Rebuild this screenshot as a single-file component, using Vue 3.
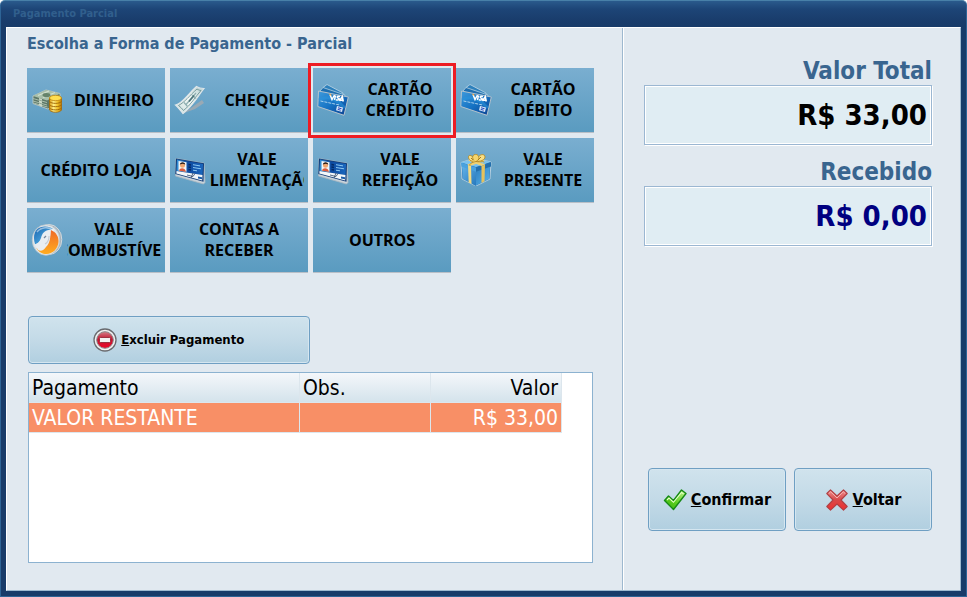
<script setup>
const methods = [
  { label: ['DINHEIRO'], icon: 'cash' },
  { label: ['CHEQUE'], icon: 'cheque' },
  { label: ['CARTÃO', 'CRÉDITO'], icon: 'card', selected: true },
  { label: ['CARTÃO', 'DÉBITO'], icon: 'card' },
  { label: ['CRÉDITO LOJA'] },
  { label: ['VALE', 'ALIMENTAÇÃO'], icon: 'badge' },
  { label: ['VALE', 'REFEIÇÃO'], icon: 'badge' },
  { label: ['VALE', 'PRESENTE'], icon: 'gift' },
  { label: ['VALE', 'COMBUSTÍVEL'], icon: 'fuel' },
  { label: ['CONTAS A', 'RECEBER'] },
  { label: ['OUTROS'] },
]

const payments = [{ name: 'VALOR RESTANTE', note: '', value: 'R$ 33,00' }]
</script>

<template>
  <div class="window">
    <svg class="defs" aria-hidden="true">
      <defs>
        <linearGradient id="gold" x1="0" x2="1"><stop offset="0" stop-color="#d99a10" /><stop offset=".35" stop-color="#fff08a" /><stop offset=".7" stop-color="#f0bd20" /><stop offset="1" stop-color="#b87808" /></linearGradient>
        <linearGradient id="card" x1="0" y1="0" x2="1" y2="1"><stop offset="0" stop-color="#3f9bdc" /><stop offset=".5" stop-color="#1673c4" /><stop offset="1" stop-color="#0a3c8c" /></linearGradient>
        <linearGradient id="paper" x1="0" y1="1" x2="1" y2="0"><stop offset="0" stop-color="#c8dcdc" /><stop offset=".5" stop-color="#f2f8f6" /><stop offset="1" stop-color="#b5cfd0" /></linearGradient>
        <linearGradient id="idcard" x1="0" x2="1"><stop offset="0" stop-color="#3692d8" /><stop offset=".45" stop-color="#0d4aa0" /><stop offset="1" stop-color="#1b67be" /></linearGradient>
        <linearGradient id="giftL" x1="0" y1="0" x2="1" y2="1"><stop offset="0" stop-color="#63b2e8" /><stop offset="1" stop-color="#2678bd" /></linearGradient>
        <linearGradient id="giftR" x1="0" y1="0" x2="1" y2="1"><stop offset="0" stop-color="#2a7dc0" /><stop offset="1" stop-color="#5cb4ea" /></linearGradient>
        <linearGradient id="orange" x1="0" y1="0" x2="0" y2="1"><stop offset="0" stop-color="#f06a28" /><stop offset="1" stop-color="#ffac20" /></linearGradient>
        <linearGradient id="sky" x1="0" y1="0" x2="1" y2="1"><stop offset="0" stop-color="#1763ae" /><stop offset="1" stop-color="#62c2f2" /></linearGradient>
        <linearGradient id="red" x1="0" y1="0" x2="0" y2="1"><stop offset="0" stop-color="#d28088" /><stop offset=".45" stop-color="#c41430" /><stop offset="1" stop-color="#ec0828" /></linearGradient>
        <linearGradient id="green" x1="1" y1="0" x2="0" y2="1"><stop offset="0" stop-color="#c8f59a" /><stop offset=".55" stop-color="#5cd020" /><stop offset="1" stop-color="#3aae10" /></linearGradient>
        <linearGradient id="cross" x1="0" y1="0" x2="0" y2="1"><stop offset="0" stop-color="#f09090" /><stop offset=".5" stop-color="#d84848" /><stop offset="1" stop-color="#f03030" /></linearGradient>
      </defs>
    </svg>

    <header class="titlebar">Pagamento Parcial</header>

    <main class="content">
      <section class="left">
        <h1 class="heading">Escolha a Forma de Pagamento - Parcial</h1>

        <div class="methods">
          <button
            v-for="(m, i) in methods"
            :key="i"
            type="button"
            class="tile"
            :class="{ selected: m.selected }"
          >
            <svg v-if="m.icon" class="tile-icon" viewBox="0 0 32 32" aria-hidden="true">
              <g v-if="m.icon === 'cash'">
                <path d="M2 12 15 6l14 3.500v7L17 25 2 19.500z" fill="#5d7767" stroke="#c8d0cc" stroke-width=".8" />
                <path d="M2 12 15 6l14 3.500-13 7z" fill="#a9c0ab" />
                <path d="M7 11.500 18 7M12 13.500 24 8.500" stroke="#d3e0d0" stroke-width="1.300" />
                <ellipse cx="15.500" cy="11" rx="4" ry="2" fill="#66836a" />
                <path d="M2 14.500l14 4M2 17l14 4M2.500 19l14 4" stroke="#a8bdab" stroke-width="1" fill="none" />
                <path d="M8 14v7.500l3 1.200v-7.600z" fill="#cbd8c8" />
                <path d="M8 16l3 1M8 19l3 1" stroke="#86a08c" stroke-width=".8" />
                <path d="M18.500 14v12c2 3 10.500 3 12 0V14z" fill="url(#gold)" stroke="#a66a06" stroke-width=".8" />
                <path d="M18.500 17.500c2 2.500 10 2.500 12 0M18.500 20.800c2 2.500 10 2.500 12 0M18.500 24c2 2.500 10 2.500 12 0" fill="none" stroke="#9a6204" stroke-width=".9" />
                <ellipse cx="24.500" cy="14" rx="6" ry="2.700" fill="#ffdf50" stroke="#b98210" stroke-width=".8" />
              </g>
              <g v-else-if="m.icon === 'cheque'">
                <path d="M10 29 28 16l2 3-9 6z" fill="#9aa9b4" />
                <path d="M1.500 21C9 19 12 12 22.500 2.500c3 2 5 2 7.500 2C24 12 19 22 9 29.500 6 26 4 23 1.500 21z" fill="url(#paper)" stroke="#dfe6e8" stroke-width="1.200" />
                <path d="M4.500 21.500C11 18 15 12 23 5c1.500 1 2.500 1.300 4 1.500C21 13 17 21 9.500 26.500 8 24.500 6.500 23 4.500 21.500z" fill="none" stroke="#6f9496" stroke-width=".9" />
                <path d="M12 20.500 22 9M10 18.500l3.500 4M18 11l4 3.500" stroke="#8fafb1" stroke-width="1.200" />
                <path d="M15 17.500 20 11.500" stroke="#4d757b" stroke-width="1.600" />
              </g>
              <g v-else-if="m.icon === 'card'">
                <path d="M6 3.500l4-3L26 9l-2 14z" fill="#2d80bc" stroke="#bed6e4" stroke-width=".8" />
                <path d="M3 7l3-3.500L28 11l-3 13z" fill="#1c6eb0" stroke="#b3cfdf" stroke-width=".8" />
                <path d="M1.500 7 31.300 13 27 31.300 .800 22.500z" fill="url(#card)" stroke="#b4c2cc" stroke-width="1" />
                <path d="M2 16c9-5 17-1 26 8" fill="none" stroke="#2b94dc" stroke-width="3" opacity=".6" />
                <path d="M13 10.500l2 5 2.500-4.500M18.500 11.300l-1 4.700M23 12.500c-4-1-3 1.500-1.500 1.800s.5 2.500-2.500 1.500M22.500 17l2.800-4.500 1 5M23.500 16l2.500.6" fill="none" stroke="#fff" stroke-width="1.500" />
                <path d="M11.500 9.800l2.500.5.600 2z" fill="#f29a26" />
                <path d="M3.500 17l19 4" stroke="#a9d2ee" stroke-width="1" stroke-dasharray="3 1" />
                <path d="M20 22l6 1.500-1 4.500-6-1.800z" fill="#dbe9fa" />
                <path d="M21 23.800l3.500 .9M20.700 25.400l3 .8" stroke="#2444b8" stroke-width="1" />
              </g>
              <g v-else-if="m.icon === 'badge'">
                <path d="M2 4.500l28 4.700 1 19.300-1.500 1.500L1.500 22z" fill="#c9d3da" stroke="#aab8c2" stroke-width=".8" />
                <path d="M2 4.500l28 4.700-.5 18.500L1.300 20z" fill="#123c78" />
                <path d="M3 5.500l26 4.500-.5 11L2.500 17z" fill="url(#idcard)" />
                <path d="M2.500 17l26 4-.3 5.500L2.300 19.500z" fill="#f3f7fa" />
                <path d="M4.500 7l8 1.300v9.500l-8-1.300z" fill="#f2f6f8" />
                <circle cx="8.500" cy="11.300" r="2.500" fill="#f0a66e" />
                <path d="M5.800 10.500c.5-3 5-3 5.500 0l-2.500-.8z" fill="#2b1c18" />
                <path d="M5 16.700c1-3.500 6-3 7 1z" fill="#dc5b3c" />
                <path d="M14.500 10.500l2.500.4M14.500 13l2.500.4M14.500 15.500l2.500.4" stroke="#062a64" stroke-width="1.500" />
                <path d="M19 10.700l7 1.200M19 13.500l8 1.300M19 16.200l4 .6" stroke="#8bc8f2" stroke-width="1" />
                <path d="M13 21l6 1.500 2-3M19 19l-2 5" stroke="#304664" stroke-width=".8" fill="none" />
                <path d="M24 22.500l4 .8v2l-4-.8z" fill="#1d5da8" />
              </g>
              <g v-else-if="m.icon === 'gift'">
                <path d="M1 8.500 15 4l16 4-1 17-14 7L2 25z" fill="#2676b8" stroke="#b5cfdf" stroke-width="1" />
                <path d="M2 12l14 5v15L3 25z" fill="url(#giftL)" />
                <path d="M16 17l14-5-1 13-13 6.500z" fill="url(#giftR)" />
                <path d="M1 8.500 15 4l16 4-15 5z" fill="#7bc2ee" />
                <path d="M1 8.500l15 5v4.200L1.500 12.500z" fill="#4aa2de" />
                <path d="M16 13.500 31 8v4.500l-15 5.200z" fill="#236fad" />
                <path d="M8 11l3 1 .5 18-2.800-1.500z" fill="#f4da82" />
                <path d="M21.500 12l3.500-1.300-.5 16.600-3 1.600z" fill="#e6c25c" />
                <path d="M7 10.500 22 5l3 1.500-14 5.300zM8 6.500l3-1 14.500 5-4 1.500z" fill="#efd174" />
                <path d="M16 7C12 0 8 .500 8.500 3.500S12 8 16 7c3-8 9-7.500 9-4 0 3-5 5-9 4z" fill="#f8df86" stroke="#b58a25" stroke-width=".9" />
                <path d="M14 6.500c-4-5 2-8 4-5s0 5-2 6c-5 1-7 3-6 4M16 7.500c5 1 8-1 8 1" fill="#f6d66d" stroke="#ae831e" stroke-width=".8" />
                <path d="M11 4l2 1.800M21 3l-3 3" stroke="#a67a18" stroke-width="1" />
              </g>
              <g v-else>
                <ellipse cx="18" cy="15.500" rx="12.800" ry="15" fill="#a8b2b9" stroke="#d2dadf" stroke-width="1" />
                <ellipse cx="15" cy="16" rx="13.800" ry="15.300" fill="#e2e7ea" stroke="#b9c4cb" stroke-width=".8" />
                <path d="M3 14C3 6 8 2.500 14 2.500c4 0 6 1 8 2.500-7 1-9 4-10.500 8C9 18 6 20 4 20c-.6-2-1-4-1-6z" fill="url(#sky)" />
                <path d="M20 6c5 2 8 7 7.500 12-.5 7-6 12-12 12-4 0-8-2-10-6 6-1 8-4 10-5 3-2 4-7 4.500-13z" fill="url(#orange)" />
                <path d="M19 6c-5 0-8 3-9 8-1.500 4-4 6-6 7l3 5c3 2 6 0 8-3 4-4 5-10 4-17z" fill="#e9edf2" />
                <path d="M18 12c0 4-2 7-4 8" fill="none" stroke="#c5ccd6" stroke-width="1.200" />
                <path d="M13 14l2-2" stroke="#76869a" stroke-width="1.300" />
                <path d="M6 8c4-5 12-6 17-1" fill="none" stroke="#fff" stroke-width="1.500" opacity=".5" />
              </g>
            </svg>
            <span class="tile-label"><span v-for="line in m.label" :key="line" class="line">{{ line }}</span></span>
          </button>
        </div>

        <button type="button" class="action remove">
          <svg class="icon" viewBox="0 0 24 24" aria-hidden="true">
            <circle cx="12" cy="12" r="11" fill="#f1f1f2" stroke="#6a6b6f" stroke-width="1.300" />
            <circle cx="12" cy="12" r="8.300" fill="url(#red)" stroke="#8b888b" stroke-width="1" />
            <rect x="6.500" y="9.500" width="11" height="5" rx="1" fill="#f3f3f3" stroke="#8a1c2a" stroke-width=".8" />
          </svg>
          <span><u>E</u>xcluir Pagamento</span>
        </button>

        <div class="grid">
          <table class="table">
            <colgroup><col class="c-name"><col class="c-note"><col class="c-value"></colgroup>
            <thead>
              <tr><th>Pagamento</th><th>Obs.</th><th class="num">Valor</th></tr>
            </thead>
            <tbody>
              <tr v-for="p in payments" :key="p.name">
                <td>{{ p.name }}</td><td>{{ p.note }}</td><td class="num">{{ p.value }}</td>
              </tr>
            </tbody>
          </table>
        </div>
      </section>

      <aside class="right">
        <label class="total-label" for="total">Valor Total</label>
        <input id="total" class="total" type="text" value="R$ 33,00" readonly>
        <label class="total-label" for="received">Recebido</label>
        <input id="received" class="total received" type="text" value="R$ 0,00" readonly>

        <div class="actions">
          <button type="button" class="action big">
            <svg class="icon" viewBox="0 0 24 24" aria-hidden="true">
              <path d="M1.500 12.500 5.500 8l5 4.500L18.500 2l4.500 3.500L10.500 21.500z" fill="url(#green)" stroke="#168a16" stroke-width="1.400" stroke-linejoin="round" />
              <path d="M4 12l2-2 4.500 4.300L18.500 4.500l2 1.300" fill="none" stroke="#e5ffc9" stroke-width="1.100" />
            </svg>
            <span><u>C</u>onfirmar</span>
          </button>
          <button type="button" class="action big">
            <svg class="icon" viewBox="0 0 24 24" aria-hidden="true">
              <path d="M5.500 1.800 12 8l6.500-6.200L22.200 5.500 16 12l6.200 6.500-3.700 3.700L12 16l-6.500 6.200-3.700-3.700L8 12 1.800 5.500z" fill="url(#cross)" stroke="#b04044" stroke-width="1.100" stroke-linejoin="round" />
              <path d="M3.800 5.500l1.900-1.700L12 10l6.300-6.200 1.900 1.700" fill="none" stroke="#f7b4b0" stroke-width="1" />
            </svg>
            <span><u>V</u>oltar</span>
          </button>
        </div>
      </aside>
    </main>
  </div>
</template>

<style>
body {
  margin: 0;
}
</style>

<style scoped>
.window {
  box-sizing: border-box;
  display: flex;
  flex-direction: column;
  min-height: 100vh;
  padding: 0 5px 5px;
  border: 1px solid #2e6496;
  border-top-color: #4880a8;
  border-radius: 5px 5px 0 0;
  background: linear-gradient(#2a5a8c, #1d4577 8px, #193c6b 20px, #183b69 26px);
  font-family: "DejaVu Sans Condensed", Tahoma, sans-serif;
}

.defs {
  position: absolute;
  width: 0;
  height: 0;
}

.titlebar {
  height: 26px;
  padding-left: 7px;
  color: #315f8d;
  font-size: 11px;
  font-weight: bold;
  line-height: 25px;
}

.content {
  flex: 1;
  display: flex;
  border: 1px solid #9db8cf;
  border-top-color: #fff;
  border-left-color: #fff;
  background: #e1e9f0;
}

.left {
  flex: 1;
  min-width: 0;
  display: flex;
  flex-direction: column;
  padding: 4px 28px 27px 20px;
}

.heading {
  margin: 0 0 12px;
  color: #39658f;
  font-size: 16px;
  line-height: 24px;
}

.methods {
  display: grid;
  grid-template-columns: repeat(4, 1fr);
  gap: 5px;
}

.tile {
  display: flex;
  align-items: center;
  box-sizing: border-box;
  height: 65px;
  min-width: 0;
  padding: 0 4px;
  border: 0;
  border-bottom: 1px solid #b9bfc7;
  background: linear-gradient(#7aaed0, #5a9bc0);
  color: #000;
  font: bold 16px/21px "Open Sans", "Segoe UI", sans-serif;
}

.selected {
  outline: 3px solid #ed1c24;
  outline-offset: 2px;
}

.tile-icon {
  flex: none;
  width: 32px;
  height: 32px;
  margin-right: 4px;
}

.tile-label {
  flex: 1;
  min-width: 0;
  overflow: hidden;
}

.line {
  display: flex;
  justify-content: center;
  white-space: nowrap;
}

.action {
  display: flex;
  align-items: center;
  justify-content: center;
  gap: 4px;
  box-sizing: border-box;
  border: 1px solid #6f9fc3;
  border-radius: 4px;
  background: linear-gradient(#d0e3ed, #c3dae7 50%, #b1cfe0);
  box-shadow: inset 0 0 0 1px #d5e6f0;
  color: #000;
  font: bold 13px/20px "DejaVu Sans Condensed", Tahoma, sans-serif;
}

.icon {
  flex: none;
  width: 24px;
  height: 24px;
}

.remove {
  width: calc(50% - 2px);
  height: 48px;
  margin: 43px 0 8px 1px;
}

.grid {
  flex: 1;
  margin: 0 1px;
  border: 1px solid #8cb2d0;
  background: #fff;
}

.table {
  width: 533px;
  max-width: 100%;
  table-layout: fixed;
  border-collapse: separate;
  border-spacing: 0;
  font-size: 21px;
  line-height: 27px;
}

.c-name {
  width: 271px;
}

th,
td {
  box-sizing: border-box;
  height: 30px;
  padding: 2px 3px 0;
  border-right: 1px solid #dce6ed;
  border-bottom: 1px solid #dce6ed;
  font-weight: normal;
  text-align: left;
}

th {
  background: linear-gradient(#f4f7fa, #d4e3ec);
}

td {
  background: #f88f66;
  color: #fff;
}

.num {
  text-align: right;
}

.right {
  display: flex;
  flex-direction: column;
  box-sizing: border-box;
  width: 338px;
  padding: 30px 28px 59px 21px;
  border-left: 1px solid #9db8cf;
  box-shadow: inset 1px 0 #fff;
}

.total-label {
  color: #39658f;
  font-size: 24px;
  font-weight: bold;
  line-height: 27px;
  text-align: right;
}

.total {
  box-sizing: border-box;
  width: 100%;
  height: 60px;
  margin: 0 0 14px;
  padding: 0 4px;
  border: 1px solid #9bb7d2;
  border-radius: 0;
  outline: 0;
  background: #e0edf3;
  box-shadow: inset 0 0 0 1px #fff, 1px 1px #fff;
  color: #000;
  font: bold 29px "DejaVu Sans Condensed", Tahoma, sans-serif;
  text-align: right;
}

.received {
  color: #000080;
}

.actions {
  display: grid;
  grid-template-columns: 1fr 1fr;
  gap: 8px;
  margin-top: auto;
  padding-left: 4px;
}

.big {
  height: 63px;
  font-size: 16px;
}
</style>
